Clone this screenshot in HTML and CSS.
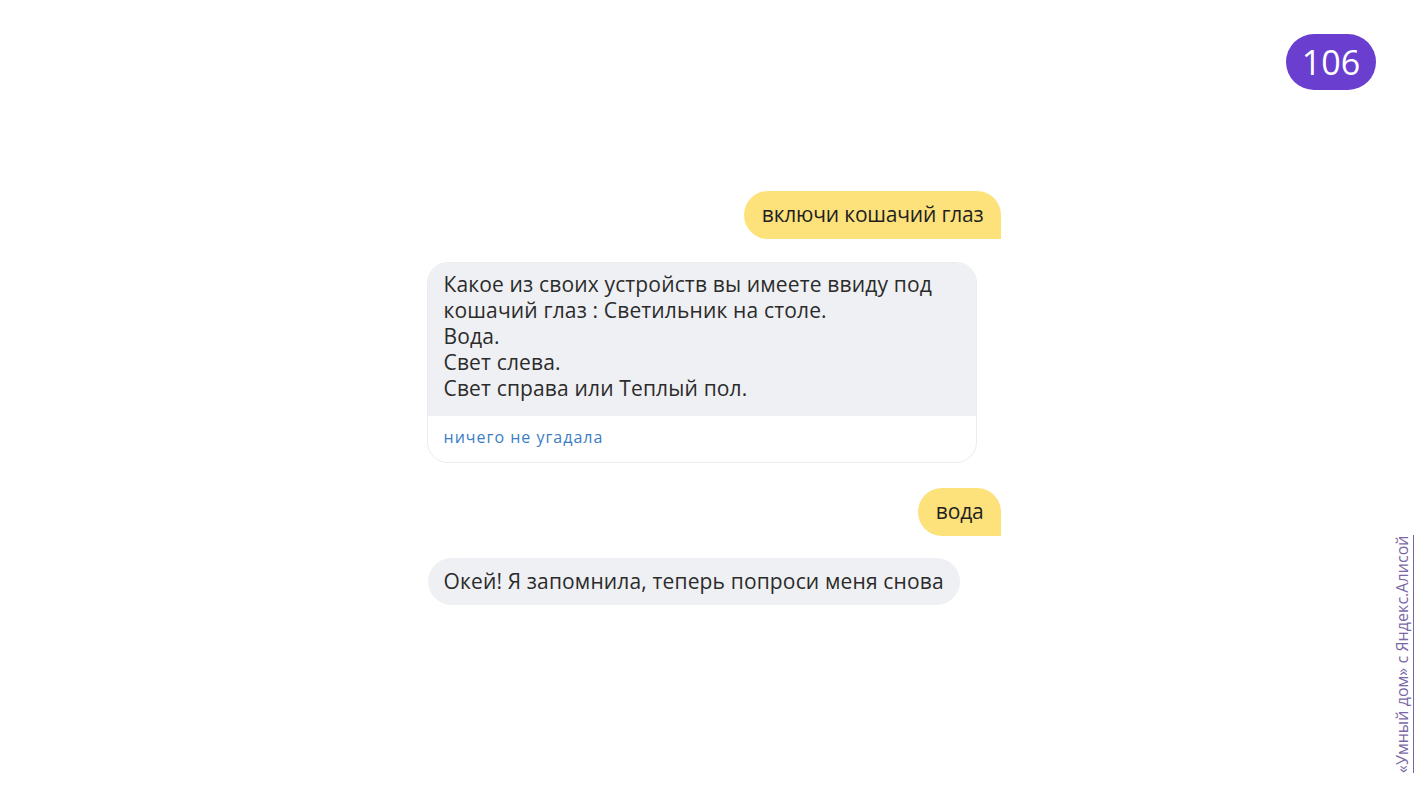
FILE: index.html
```html
<!DOCTYPE html>
<html lang="ru">
<head>
  <meta charset="UTF-8">
  <title>Кошачий глаз</title>
  <link rel="stylesheet" href="styles.css">
</head>
<body>

  <div class="page-num">106</div>

  <div class="chat">
    <div class="msg user">включи кошачий глаз</div>

    <div class="msg bot card">
      <div class="card-text">
        Какое из своих устройств вы имеете ввиду под<br>
        кошачий глаз : Светильник на столе.<br>
        Вода.<br>
        Свет слева.<br>
        Свет справа или Теплый пол.
      </div>
      <div class="card-action">ничего не угадала</div>
    </div>

    <div class="msg user">вода</div>

    <div class="msg bot">Окей! Я запомнила, теперь попроси меня снова</div>
  </div>

  <div class="side-note">«Умный дом» с Яндекс.Алисой</div>

</body>
</html>
```

FILE: styles.css
```css
body {
  margin: 0;
  font-family: "Open Sans", "Noto Sans", sans-serif;
  background: #fff;
  width: 1428px;
  height: 803px;
  position: relative;
  overflow: hidden;
}

.page-num {
  position: absolute;
  top: 34px;
  right: 52px;
  width: 90px;
  height: 56px;
  border-radius: 28px;
  background-color: #6a3fd0;
  color: #fff;
  font-size: 34px;
  line-height: 56px;
  text-align: center;
}

.chat {
  width: 573px;
  margin: 0 auto;
  padding-top: 191px;
  display: flex;
  flex-direction: column;
  align-items: flex-start;
}

.msg {
  font-size: 21px;
  color: #1f1f1f;
  line-height: 26px;
  letter-spacing: -0.2px;
}

.user {
  align-self: flex-end;
  background-color: #fde27c;
  padding: 10px 17px 12px 18px;
  border-radius: 24px 24px 0 24px;
}

.bot {
  background-color: #eff0f3;
  padding: 10px 16px 11px 16px;
  border-radius: 24px;
  margin-top: 24px;
  margin-bottom: 26px;
  color: #2b2b2b;
  letter-spacing: 0.15px;
}

.msg.bot:last-child {
  margin-top: 22px;
  margin-bottom: 0;
}

.card {
  width: 548px;
  padding: 0;
  border-radius: 20px;
  overflow: hidden;
  background-color: #fff;
  box-shadow: 0 0 0 1px #ececef;
}

.card-text {
  background-color: #eff0f3;
  padding: 8px 16px 15px 16px;
}

.card-action {
  font-size: 16px;
  letter-spacing: 1px;
  color: #3a7dc6;
  padding: 9px 16px 13px 16px;
  line-height: 24px;
}

.side-note {
  position: absolute;
  left: 1394px;
  top: 773px;
  transform-origin: 0 0;
  transform: rotate(-90deg);
  white-space: nowrap;
  font-size: 16px;
  letter-spacing: 0.05px;
  color: #7a68a6;
  line-height: 16px;
  border-bottom: 1px solid #7a68a6;
  padding-bottom: 3px;
}
```
